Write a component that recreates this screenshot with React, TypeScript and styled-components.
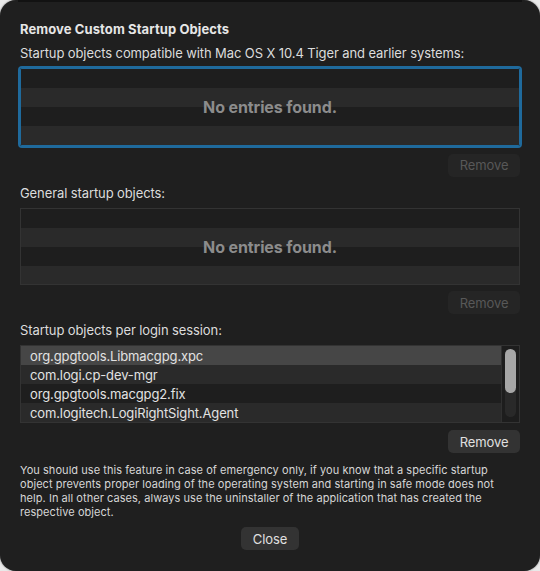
import React from "react";
import styled, { createGlobalStyle } from "styled-components";

const GlobalStyle = createGlobalStyle`
  html, body { margin: 0; padding: 0; background: #e9e9e9; }
  body { font-family: Inter, "Noto Sans", "Liberation Sans", sans-serif; -webkit-font-smoothing: antialiased; }
  * { box-sizing: border-box; }
`;

const Sheet = styled.div`
  position: relative;
  width: 540px;
  height: 571px;
  background: #1f1f1f;
  border-radius: 16px;
  box-shadow: 0 0 2px rgba(0, 0, 0, 0.6);
  padding: 21px 20px 21px;
  display: flex;
  flex-direction: column;
  color: #dedede;
  &::before {
    content: "";
    position: absolute;
    top: 0;
    left: 18px;
    right: 18px;
    height: 2px;
    background: #121212;
  }
`;

const Title = styled.h1`
  margin: 0;
  font-size: 13px;
  line-height: 16px;
  font-weight: 700;
  letter-spacing: 0.1px;
  color: #e6e6e6;
`;

const Label = styled.div<{ $mt: number }>`
  margin-top: ${(p) => p.$mt}px;
  font-size: 13px;
  line-height: 16px;
  letter-spacing: -0.1px;
  color: #dcdcdc;
`;

const TableBox = styled.div<{ $mt: number; $focused?: boolean }>`
  position: relative;
  margin-top: ${(p) => p.$mt}px;
  height: 78px;
  border: 1px solid ${(p) => (p.$focused ? "#1f6a9c" : "#333333")};
  box-shadow: ${(p) => (p.$focused ? "0 0 0 2px #1f6a9c" : "none")};
  border-radius: ${(p) => (p.$focused ? "2px" : "0")};
  overflow: hidden;
  display: flex;
`;

const Rows = styled.div`
  flex: 1;
  display: flex;
  flex-direction: column;
`;

const Row = styled.div<{ $stripe: boolean; $selected?: boolean }>`
  flex: 0 0 19px;
  height: 19px;
  padding-left: 9px;
  display: flex;
  align-items: center;
  font-size: 13px;
  letter-spacing: -0.12px;
  color: #e2e2e2;
  white-space: nowrap;
  background: ${(p) => (p.$selected ? "#464646" : p.$stripe ? "#2a2a2a" : "#1e1e1e")};
`;

const Empty = styled.div`
  position: absolute;
  inset: 0;
  display: flex;
  align-items: center;
  justify-content: center;
  font-size: 16px;
  font-weight: 700;
  letter-spacing: -0.1px;
  color: #8c8c8c;
`;

const ScrollTrack = styled.div`
  flex: 0 0 18px;
  border-left: 1px solid #303030;
  background: #1d1d1d;
  padding: 3px 3px 5px 3px;
  display: flex;
`;

const ScrollGroove = styled.div`
  flex: 1;
  border-radius: 6px;
  background: #292929;
  display: flex;
  flex-direction: column;
`;

const ScrollThumb = styled.div`
  height: 44px;
  border-radius: 6px;
  background: #a6a6a6;
`;

const ButtonRow = styled.div<{ $mt: number; $center?: boolean }>`
  margin-top: ${(p) => p.$mt}px;
  display: flex;
  justify-content: ${(p) => (p.$center ? "center" : "flex-end")};
`;

const Button = styled.button<{ $width: number }>`
  width: ${(p) => p.$width}px;
  height: 23px;
  border: none;
  border-radius: 5px;
  background: #333333;
  color: #e0e0e0;
  font-family: inherit;
  font-size: 13px;
  letter-spacing: -0.1px;
  padding: 0;
  &:disabled {
    background: #252525;
    color: #585858;
  }
`;

const Note = styled.p`
  margin: 10px 0 0;
  font-size: 11px;
  line-height: 14px;
  letter-spacing: 0.05px;
  color: #d6d6d6;
`;

const stripes = [false, true, false, true];

const EmptyTable: React.FC<{ mt: number; focused?: boolean }> = ({ mt, focused }) => (
  <TableBox $mt={mt} $focused={focused}>
    <Rows>
      {stripes.map((s, i) => (
        <Row key={i} $stripe={s} />
      ))}
    </Rows>
    <Empty>No entries found.</Empty>
  </TableBox>
);

const items = [
  "org.gpgtools.Libmacgpg.xpc",
  "com.logi.cp-dev-mgr",
  "org.gpgtools.macgpg2.fix",
  "com.logitech.LogiRightSight.Agent",
];

export default function App() {
  return (
    <>
      <GlobalStyle />
      <Sheet>
        <Title>Remove Custom Startup Objects</Title>
        <Label $mt={8}>Startup objects compatible with Mac OS X 10.4 Tiger and earlier systems:</Label>
        <EmptyTable mt={7} focused />
        <ButtonRow $mt={8}>
          <Button $width={72} disabled>Remove</Button>
        </ButtonRow>
        <Label $mt={8}>General startup objects:</Label>
        <EmptyTable mt={7} />
        <ButtonRow $mt={6}>
          <Button $width={72} disabled>Remove</Button>
        </ButtonRow>
        <Label $mt={8}>Startup objects per login session:</Label>
        <TableBox $mt={7}>
          <Rows>
            {items.map((t, i) => (
              <Row key={t} $stripe={stripes[i]} $selected={i === 0}>
                {t}
              </Row>
            ))}
          </Rows>
          <ScrollTrack>
            <ScrollGroove>
              <ScrollThumb />
            </ScrollGroove>
          </ScrollTrack>
        </TableBox>
        <ButtonRow $mt={7}>
          <Button $width={72}>Remove</Button>
        </ButtonRow>
        <Note>
          You should use this feature in case of emergency only, if you know that a specific startup
          object prevents proper loading of the operating system and starting in safe mode does not
          help. In all other cases, always use the uninstaller of the application that has created the
          respective object.
        </Note>
        <ButtonRow $mt={8} $center>
          <Button $width={58}>Close</Button>
        </ButtonRow>
      </Sheet>
    </>
  );
}
